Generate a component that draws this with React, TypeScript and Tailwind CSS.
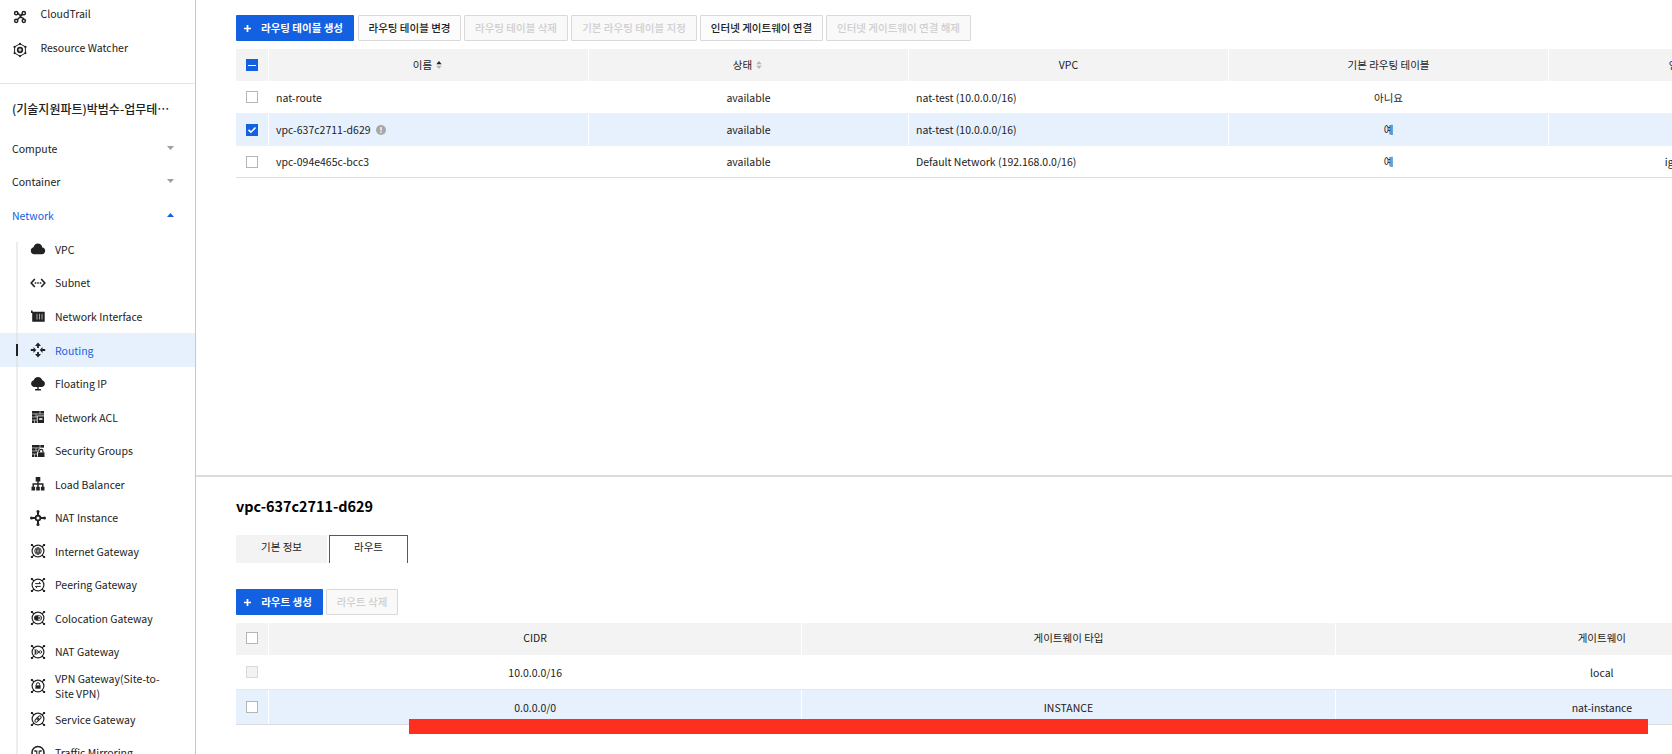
import React from "react";
import clsx from "clsx";

const Icon = ({ children }: { children: React.ReactNode }) => (
  <svg
    viewBox="0 0 16 16"
    className="h-4 w-4 shrink-0 text-[#222]"
    fill="none"
    stroke="currentColor"
    strokeWidth="1.2"
  >
    {children}
  </svg>
);

// round frame with four corner handles, shared by every gateway icon
const GatewayIcon = ({ children }: { children: React.ReactNode }) => (
  <Icon>
    <circle cx="8" cy="8" r="5.9" />
    <path d="M1.5 1.5l2.6 2.6M14.5 1.5l-2.6 2.6M1.5 14.5l2.6-2.6M14.5 14.5l-2.6-2.6" />
    <path
      d="M.9.9h2v2h-2zM13.1.9h2v2h-2zM.9 13.1h2v2h-2zM13.1 13.1h2v2h-2z"
      fill="currentColor"
      stroke="none"
    />
    {children}
  </Icon>
);

const CloudTrailIcon = () => (
  <Icon>
    <g strokeWidth="1.5">
      <circle cx="4.2" cy="4.2" r="1.6" />
      <circle cx="11.8" cy="4.2" r="1.6" />
      <circle cx="4.2" cy="11.8" r="1.6" />
      <circle cx="11.8" cy="11.8" r="1.6" />
      <path d="M5.8 4.2c1.2 0 1 2 2.200 2 1 0 1.400-.4 2.300-1M10.500 5.500l-5.200 5.200M8.500 8.600c1.700-.3 2.900.4 3.100 1.600" />
    </g>
  </Icon>
);

const WatcherIcon = () => (
  <Icon>
    <path d="M8 1.8l5.4 3.1v6.2L8 14.2l-5.4-3.1V4.9z" strokeWidth="1" />
    <circle cx="8" cy="8" r="2.3" strokeWidth="1.7" />
    <circle cx="8" cy="8" r=".6" fill="currentColor" stroke="none" />
    <g fill="currentColor" stroke="none">
      <circle cx="8" cy="1.9" r="1.1" />
      <circle cx="13.4" cy="4.9" r="1.1" />
      <circle cx="13.4" cy="11.1" r="1.1" />
      <circle cx="8" cy="14.1" r="1.1" />
      <circle cx="2.6" cy="11.1" r="1.1" />
      <circle cx="2.6" cy="4.9" r="1.1" />
    </g>
  </Icon>
);

const VpcIcon = () => (
  <Icon>
    <path
      d="M4.300 13.200A3.600 3.600 0 0 1 .8 9.700c0-1.700 1.100-3 2.700-3.400C4.100 4 5.700 2.500 7.800 2.500c2.300 0 4.100 1.600 4.500 4 1.700.2 2.900 1.500 2.900 3.300 0 1.900-1.400 3.400-3.300 3.400z"
      fill="currentColor"
      stroke="none"
    />
  </Icon>
);

const SubnetIcon = () => (
  <Icon>
    <path d="M4.800 4L1.200 8l3.600 4M11.200 4l3.600 4-3.600 4" strokeWidth="1.6" />
    <path d="M4.700 8h1.600M7.200 8h1.600M9.700 8h1.600" strokeWidth="1.5" />
  </Icon>
);

const InterfaceIcon = () => (
  <Icon>
    <path d="M1 1.500h1.600v1.200h12.100v10.100H2.200V4H1z" fill="currentColor" stroke="none" />
    <path d="M7 4.800v5.700M9.500 4.800v5.700M12 4.800v5.700" stroke="#ccc" strokeWidth=".8" />
  </Icon>
);

const RoutingIcon = () => (
  <Icon>
    <g fill="currentColor" stroke="none">
      <path d="M8 .6l3 3.300H8.900v2.200H7.100V3.900H5zM8 15.400l3-3.300H8.900V9.900H7.100v2.200H5z" />
      <path d="M6.200 8L3.500 5.100v2H.8v1.800h2.700v2zM9.800 8l2.700-2.900v2h2.700v1.800h-2.700v2z" />
    </g>
  </Icon>
);

const FloatingIcon = () => (
  <Icon>
    <path
      d="M8 1c2.200 0 3.800 1.300 4.300 3.200 1.500.5 2.600 1.800 2.600 3.400 0 2-1.500 3.500-3.500 3.500H8.700v2h2.200v1.500H5.100v-1.500h2.200v-2H4.600c-2 0-3.500-1.500-3.500-3.500C1.100 6 2.200 4.700 3.700 4.200 4.200 2.300 5.800 1 8 1z"
      fill="currentColor"
      stroke="none"
    />
  </Icon>
);

const AclIcon = () => (
  <Icon>
    <path d="M2 2h12v12H2z" fill="currentColor" stroke="none" />
    <path d="M2 4.900h12M2 8h5M2 11h5M10 2v3M6 5v3M4.500 11v3" stroke="#fff" strokeWidth=".6" />
    <path d="M7.300 14V6.900H14" stroke="#fff" strokeWidth=".8" />
    <path d="M9.200 9.200h3.200v1.600H9.200z" fill="#fff" stroke="none" />
  </Icon>
);

const SecurityIcon = () => (
  <Icon>
    <path d="M2 2h12v12H2z" fill="currentColor" stroke="none" />
    <path d="M2 4.900h12M2 8h6M2 11h5M10 2v3M6 5v3M4.500 11v3" stroke="#fff" strokeWidth=".6" />
    <path d="M7.100 14V9h1.300V6.300l2-1.200H14V9h.5" fill="#fff" stroke="none" />
    <path d="M8 9.400h6.500V14H8z" fill="currentColor" stroke="none" />
    <path d="M9.500 9.500V8a1.700 1.700 0 0 1 3.400 0v1.500" strokeWidth="1.2" />
  </Icon>
);

const BalancerIcon = () => (
  <Icon>
    <path
      d="M5.700 1h4.600v4.400H5.700zM1.500 10.700h3.600v3.700H1.500zM6.200 10.700h3.600v3.700H6.200zM10.900 10.700h3.600v3.700h-3.600z"
      fill="currentColor"
      stroke="none"
    />
    <path d="M8 5v6M3.200 11V8h9.600v3" strokeWidth="1.4" />
  </Icon>
);

const NatInstanceIcon = () => (
  <Icon>
    <circle cx="8" cy="8" r="2.4" strokeWidth="1.8" />
    <path d="M8 1v4.500M8 10.500V15M1 8h4.500M10.500 8H15" strokeWidth="2" />
    <g fill="currentColor" stroke="none">
      <circle cx="8" cy="1.500" r="1.5" />
      <circle cx="8" cy="14.500" r="1.5" />
      <circle cx="1.500" cy="8" r="1.5" />
      <circle cx="14.500" cy="8" r="1.5" />
    </g>
  </Icon>
);

const InternetIcon = () => (
  <GatewayIcon>
    <g strokeWidth=".8">
      <circle cx="8" cy="8" r="3.3" />
      <ellipse cx="8" cy="8" rx="1.5" ry="3.3" />
      <path d="M4.700 8h6.600M8 4.700v6.600M5.200 6.400h5.600M5.200 9.600h5.600" strokeWidth=".6" />
    </g>
  </GatewayIcon>
);

const PeeringIcon = () => (
  <GatewayIcon>
    <path d="M5.200 6.600h5.200M9 5l1.700 1.600M10.800 9.400H5.600M7 11L5.300 9.400" strokeWidth="1" />
  </GatewayIcon>
);

const ColocationIcon = () => (
  <GatewayIcon>
    <rect x="4.3" y="5.7" width="7.4" height="4.6" rx="2.3" strokeWidth=".9" />
    <circle cx="6.7" cy="8" r="2.2" fill="currentColor" stroke="none" />
    <path d="M9.800 7v2" strokeWidth="1" />
  </GatewayIcon>
);

const NatGatewayIcon = () => (
  <GatewayIcon>
    <path d="M4.200 6h2.600L9 8l-2.200 2H4.200M4.200 8H9M5.500 6v4" strokeWidth=".9" />
    <circle cx="10.4" cy="8" r="1.3" strokeWidth=".9" />
  </GatewayIcon>
);

const VpnIcon = () => (
  <GatewayIcon>
    <path d="M5.400 7.300h5.200v3.400H5.400z" fill="currentColor" stroke="none" />
    <path d="M6.400 7.400V6.300a1.600 1.600 0 0 1 3.200 0v1.100" strokeWidth="1" />
  </GatewayIcon>
);

const ServiceIcon = () => (
  <GatewayIcon>
    <g strokeWidth="1" transform="rotate(-45 8 8)">
      <rect x="4.1" y="6.600" width="4.8" height="2.8" rx="1.4" />
      <rect x="7.1" y="6.600" width="4.8" height="2.8" rx="1.4" />
    </g>
  </GatewayIcon>
);

const MirroringIcon = () => (
  <Icon>
    <circle cx="8" cy="7.5" r="6" strokeWidth="1.5" />
    <path d="M5.200 6h1.600v3M10.800 6H9.200v3M5 5v2M11 5v2" strokeWidth="1.1" />
  </Icon>
);

const menu = [
  { name: "VPC", icon: <VpcIcon /> },
  { name: "Subnet", icon: <SubnetIcon /> },
  { name: "Network Interface", icon: <InterfaceIcon /> },
  { name: "Routing", icon: <RoutingIcon />, active: true },
  { name: "Floating IP", icon: <FloatingIcon /> },
  { name: "Network ACL", icon: <AclIcon /> },
  { name: "Security Groups", icon: <SecurityIcon /> },
  { name: "Load Balancer", icon: <BalancerIcon /> },
  { name: "NAT Instance", icon: <NatInstanceIcon /> },
  { name: "Internet Gateway", icon: <InternetIcon /> },
  { name: "Peering Gateway", icon: <PeeringIcon /> },
  { name: "Colocation Gateway", icon: <ColocationIcon /> },
  { name: "NAT Gateway", icon: <NatGatewayIcon /> },
  { name: "VPN Gateway(Site-to-Site VPN)", icon: <VpnIcon /> },
  { name: "Service Gateway", icon: <ServiceIcon /> },
  { name: "Traffic Mirroring", icon: <MirroringIcon /> },
];

const Group = ({ name, open }: { name: string; open?: boolean }) => (
  <div
    className={clsx(
      "flex h-[33.55px] shrink-0 items-center justify-between pr-[21px] pl-3",
      open && "text-[#1360e0]",
    )}
  >
    <span>{name}</span>
    <svg viewBox="0 0 7 4" className="mb-0.5 h-1 w-[7px]">
      <path d={open ? "M0 4h7L3.500 0z" : "M0 0h7L3.500 4z"} fill={open ? "#1360e0" : "#a0a0a0"} />
    </svg>
  </div>
);

const Sidebar = () => (
  <aside className="flex h-full w-[196px] shrink-0 flex-col overflow-hidden border-r border-[#c8c8c8]">
    <div className="flex h-[84px] shrink-0 flex-col border-b border-[#e5e5e5] pl-3">
      <div className="flex h-[31px] items-center gap-[12.5px]">
        <div className="pt-[3px]">
          <CloudTrailIcon />
        </div>
        <span className="pb-1">CloudTrail</span>
      </div>
      <div className="flex h-[34px] items-center gap-[12.5px]">
        <div className="pt-1">
          <WatcherIcon />
        </div>
        <span className="pb-px">Resource Watcher</span>
      </div>
    </div>
    <div className="flex h-[48px] shrink-0 items-center pt-px pl-3 text-[12px] font-medium whitespace-nowrap">
      (기술지원파트)박범수-업무테⋯
    </div>
    <Group name="Compute" />
    <Group name="Container" />
    <Group name="Network" open />
    {menu.map((item) => (
      <div
        key={item.name}
        className={clsx(
          "flex h-[33.55px] shrink-0 items-center pl-4",
          item.active && "bg-[#e7f1fe] text-[#1360e0]",
        )}
      >
        <div
          className={clsx(
            "flex w-0.5 items-center",
            item.active ? "bg-[#dfe6ee]" : "bg-[#eee]",
            item.name === "VPC" ? "h-6 self-end" : "h-full",
          )}
        >
          {item.active && <div className="h-3 w-0.5 bg-[#222]" />}
        </div>
        <div className="ml-3">{item.icon}</div>
        <span className="ml-[9px] w-[106px] leading-[15px]">{item.name}</span>
      </div>
    ))}
  </aside>
);

const Button = ({
  children,
  className,
  disabled,
  primary,
}: {
  children: React.ReactNode;
  className: string;
  disabled?: boolean;
  primary?: boolean;
}) => (
  <button
    className={clsx(
      "flex h-[26px] shrink-0 items-center justify-center rounded-[1px] text-[10.5px] whitespace-nowrap",
      primary && "bg-[#1360e0] pr-[3px] font-bold text-white",
      !primary && "border border-[#d9d9d9] font-medium",
      disabled ? "bg-[#f9f9f9] text-[#cfcfcf]" : !primary && "bg-[#fcfcfc]",
      className,
    )}
    disabled={disabled}
  >
    {primary && (
      <svg viewBox="0 0 7 7" className="mr-2.5 h-[7px] w-[7px]">
        <path d="M3.500 0v7M0 3.500h7" stroke="#fff" strokeWidth="1.7" />
      </svg>
    )}
    {children}
  </button>
);

const Checkbox = ({ state }: { state?: "on" | "mixed" | "disabled" }) => (
  <span
    className={clsx(
      "flex h-3 w-3 items-center justify-center",
      (state === "on" || state === "mixed") && "bg-[#1360e0]",
      state === "disabled" && "border border-[#d9d9d9] bg-[#f3f3f3]",
      !state && "border border-[#b5b5b5] bg-white",
    )}
  >
    {state === "on" && (
      <svg viewBox="0 0 12 12" className="h-3 w-3">
        <path d="M2.500 5.900l2.400 2.300 4.600-4.700" fill="none" stroke="#fff" strokeWidth="1.6" />
      </svg>
    )}
    {state === "mixed" && <span className="h-px w-2 bg-white" />}
  </span>
);

const Sort = ({ asc }: { asc?: boolean }) => (
  <svg viewBox="0 0 6 8" className="mr-0.5 ml-1 h-2 w-1.5">
    <path d="M3 0l2.700 3.300H.3z" fill={asc ? "#222" : "#b5b5b5"} />
    <path d="M3 8l2.700-3.300H.3z" fill="#b5b5b5" />
  </svg>
);

const Check = ({ state }: { state?: "on" | "mixed" | "disabled" }) => (
  <div className="flex items-center justify-center">
    <Checkbox state={state} />
  </div>
);

const Cell = ({
  children,
  left,
  className,
}: {
  children?: React.ReactNode;
  left?: boolean;
  className?: string;
}) => (
  <div
    className={clsx(
      "flex items-center border-l border-white",
      left ? "pl-[7px]" : "justify-center",
      className,
    )}
  >
    {children}
  </div>
);

const routingTables = [
  { name: "nat-route", vpc: "nat-test (10.0.0.0/16)", main: "아니요", igw: "" },
  { name: "vpc-637c2711-d629", vpc: "nat-test (10.0.0.0/16)", main: "예", igw: "", selected: true },
  {
    name: "vpc-094e465c-bcc3",
    vpc: "Default Network (192.168.0.0/16)",
    main: "예",
    igw: "igw-094e465c-bcc",
  },
];

const RoutingTables = () => (
  <section className="h-[475px] shrink-0 pt-[15px] pl-10">
    <div className="flex gap-[3px]">
      <Button primary className="mr-px w-[118px]">
        라우팅 테이블 생성
      </Button>
      <Button className="w-[103px]">라우팅 테이블 변경</Button>
      <Button disabled className="w-[104px]">
        라우팅 테이블 삭제
      </Button>
      <Button disabled className="w-[126px]">
        기본 라우팅 테이블 지정
      </Button>
      <Button className="w-[123px]">인터넷 게이트웨이 연결</Button>
      <Button disabled className="w-[145px]">
        인터넷 게이트웨이 연결 해제
      </Button>
    </div>
    <div className="mt-2 w-[1632px]">
      <div className="grid h-8 grid-cols-[32px_repeat(5,320px)] bg-[#f3f3f3]">
        <Check state="mixed" />
        <Cell>
          이름
          <Sort asc />
        </Cell>
        <Cell>
          상태
          <Sort />
        </Cell>
        <Cell>VPC</Cell>
        <Cell>기본 라우팅 테이블</Cell>
        <Cell>인터넷 게이트웨이</Cell>
      </div>
      {routingTables.map((row, i) => (
        <div
          key={row.name}
          className={clsx(
            "grid grid-cols-[32px_repeat(5,320px)] border-b",
            i === 0 ? "h-[33px]" : "h-8",
            i === 2 ? "border-[#dcdcdc]" : "border-[#f0f0f0]",
            row.selected && "bg-[#e7f1fe]",
          )}
        >
          <Check state={row.selected ? "on" : undefined} />
          <Cell left className="pt-px">
            {row.name}
            {row.selected && (
              <svg viewBox="0 0 10 10" className="ml-[5px] h-2.5 w-2.5">
                <circle cx="5" cy="5" r="5" fill="#a8a8a8" />
                <path d="M5 2v3.600M5 6.600v1.400" stroke="#fff" strokeWidth="1.3" />
              </svg>
            )}
          </Cell>
          <Cell className="pt-px">available</Cell>
          <Cell left className="pt-px">
            {row.vpc}
          </Cell>
          <Cell className="pt-px">{row.main}</Cell>
          <Cell className="pt-px">{row.igw}</Cell>
        </div>
      ))}
    </div>
  </section>
);

const RouteDetail = () => (
  <section className="border-t-2 border-[#dcdcdc] pt-[17px] pl-10">
    <h2 className="h-[41px] text-[14.4px] leading-6 font-bold text-black">vpc-637c2711-d629</h2>
    <div className="flex h-7 gap-0.5">
      <div className="flex w-[91px] items-center justify-center bg-[#f3f3f3] pb-1">기본 정보</div>
      <div className="flex w-[79px] items-center justify-center border border-b-0 border-[#1360e0] pb-[5px]">
        라우트
      </div>
    </div>
    <div className="mt-[26px] flex gap-[3px]">
      <Button primary className="w-[87px]">
        라우트 생성
      </Button>
      <Button disabled className="w-[72px]">
        라우트 삭제
      </Button>
    </div>
    <div className="mt-2 w-[1632px]">
      <div className="grid h-8 grid-cols-[32px_repeat(3,1fr)] bg-[#f3f3f3]">
        <div className="flex justify-center pt-[9px]">
          <Checkbox />
        </div>
        <Cell className="pb-0.5">CIDR</Cell>
        <Cell className="pb-0.5">게이트웨이 타입</Cell>
        <Cell className="pb-0.5">게이트웨이</Cell>
      </div>
      <div className="grid h-[35px] grid-cols-[32px_repeat(3,1fr)] border-b border-[#e8e8e8]">
        <Check state="disabled" />
        <Cell className="pt-0.5">10.0.0.0/16</Cell>
        <Cell />
        <Cell className="pt-0.5">local</Cell>
      </div>
      <div className="grid h-[35px] grid-cols-[32px_repeat(3,1fr)] border-b border-[#dcdcdc] bg-[#e7f1fe]">
        <Check />
        <Cell className="pt-px">0.0.0.0/0</Cell>
        <Cell className="pt-px">INSTANCE</Cell>
        <Cell className="pt-px">nat-instance</Cell>
      </div>
    </div>
  </section>
);

export default function App() {
  return (
    <div className="relative flex h-[754px] w-[1672px] overflow-hidden bg-white font-['Noto_Sans_CJK_KR',sans-serif] text-[10.5px] text-[#222]">
      <Sidebar />
      <main className="min-w-0 flex-1 overflow-hidden">
        <RoutingTables />
        <RouteDetail />
      </main>
      <div className="absolute top-[719px] left-[409px] h-[15px] w-[1239px] bg-[#ff2f20]" />
    </div>
  );
}
